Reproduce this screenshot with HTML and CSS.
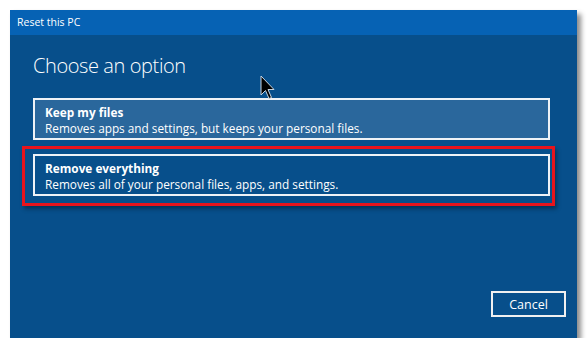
FILE: index.html
```html
<!DOCTYPE html>
<html lang="en">
  <head>
    <meta charset="UTF-8" />
    <meta name="viewport" content="width=device-width, initial-scale=1.0" />
    <title>Reset this PC</title>
    <link rel="stylesheet" href="styles.css">
  </head>
  <body>
    <div class="window">
      <div class="titlebar">Reset this PC</div>
      <div class="content">
        <h1>Choose an option</h1>
        <div class="options">
          <div class="option hover">
            <div class="option-title">Keep my files</div>
            <div class="option-desc">Removes apps and settings, but keeps your personal files.</div>
          </div>
          <div class="option marked">
            <div class="option-title">Remove everything</div>
            <div class="option-desc">Removes all of your personal files, apps, and settings.</div>
          </div>
        </div>
        <div class="footer">
          <button class="cancel">Cancel</button>
        </div>
        <!-- mouse pointer over the dialog -->
        <svg class="cursor" width="16" height="26" viewBox="0 0 16 26">
          <path d="M1 1 L1 20 L5.5 15.5 L9 23.5 L11.5 22.5 L8 14.5 L14 14.5 Z" fill="#000" stroke="#c8d4e0" stroke-width="1" stroke-linejoin="round" />
        </svg>
      </div>
    </div>
  </body>
</html>
```

FILE: styles.css
```css
body {
  margin: 0;
  padding: 0;
  background-color: #ffffff;
  font-family: "Open Sans", "Noto Sans", sans-serif;
  color: #ffffff;
}
.window {
  margin: 10px 0 0 10px;
  width: 567px;
  height: 328px;
  display: flex;
  flex-direction: column;
  box-shadow: 4px 4px 5px rgba(0, 0, 0, 0.45);
}
.titlebar {
  height: 25px;
  line-height: 25px;
  padding-left: 7px;
  font-size: 10.5px;
  background-color: #0662b4;
}
.content {
  flex: 1;
  position: relative;
  display: flex;
  flex-direction: column;
  background-color: #074f8b;
  padding: 0 11px 21px 23px;
}
h1 {
  margin: 16px 0 0 0;
  font-size: 20px;
  font-weight: 300;
  line-height: 30px;
  letter-spacing: -0.4px;
}
.options {
  display: flex;
  flex-direction: column;
  gap: 14px;
  margin-top: 17px;
  width: 517px;
}
.option {
  height: 42px;
  box-sizing: border-box;
  border: 2px solid #eef2f6;
  padding: 4px 0 0 10px;
  font-size: 11.8px;
  line-height: 16px;
  position: relative;
}
.option.hover {
  background-color: #2a679c;
}
.option-title {
  font-weight: 700;
}
.option.marked::after {
  content: "";
  position: absolute;
  left: -13px;
  top: -10px;
  right: -7px;
  bottom: -12px;
  border: 3px solid #e8141c;
  box-shadow: 2px 3px 4px rgba(0, 0, 0, 0.35);
}
.footer {
  margin-top: auto;
  display: flex;
  justify-content: flex-end;
}
.cancel {
  width: 75px;
  height: 26px;
  border: 2px solid #f0f0f0;
  background-color: transparent;
  color: #ffffff;
  font-family: "Open Sans", "Noto Sans", sans-serif;
  font-size: 12.5px;
  padding: 0;
}
.cursor {
  position: absolute;
  left: 250px;
  top: 40px;
}
```
